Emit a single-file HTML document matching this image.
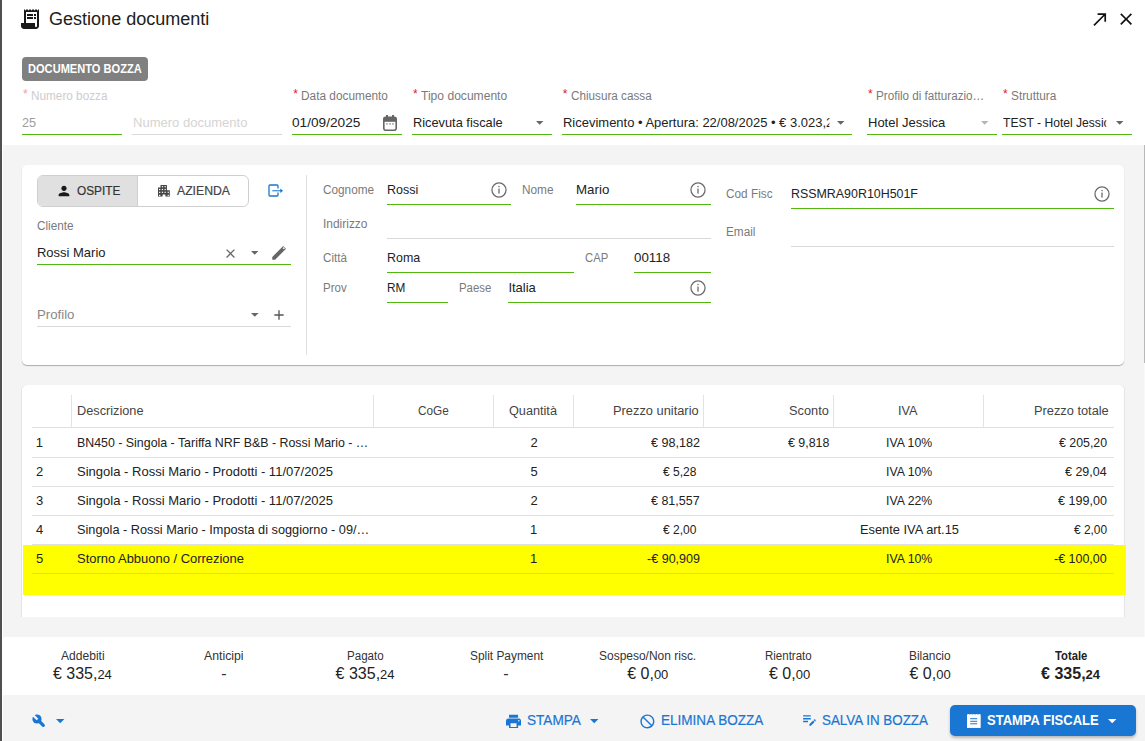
<!DOCTYPE html>
<html><head><meta charset="utf-8"><title>Gestione documenti</title>
<style>
html,body{margin:0;padding:0;}
body{width:1145px;height:741px;overflow:hidden;position:relative;background:#fff;font-family:"Liberation Sans", sans-serif;}
.r{position:absolute;}
.t{position:absolute;white-space:nowrap;}
</style></head><body>
<div class="r" style="left:0px;top:0px;width:1145px;height:741px;background:#fff;"></div>
<div class="r" style="left:3px;top:145px;width:1142px;height:596px;background:#f4f4f4;"></div>
<div class="r" style="left:0px;top:0px;width:2px;height:741px;background:#505050;"></div>
<div class="r" style="left:1144px;top:145px;width:1px;height:218px;background:#b8b8b8;"></div>
<div class="r" style="left:1144px;top:363px;width:1px;height:274px;background:#f9f9f9;"></div>
<svg class="r" style="left:18px;top:7.2px;" width="24" height="24" viewBox="0 0 24 24"><path fill="#1a1a1a" d="M19.5 3.5L18 2l-1.5 1.5L15 2l-1.5 1.5L12 2l-1.5 1.5L9 2 7.5 3.5 6 2v14H3v3c0 1.66 1.34 3 3 3h12c1.66 0 3-1.34 3-3V2l-1.5 1.5zM19 19c0 .55-.45 1-1 1s-1-.45-1-1v-3H8V5h11v14zM9 7h6v2H9zm7 0h2v2h-2zm-7 3h6v2H9zm7 0h2v2h-2z"/></svg>
<div class="t" style="left:48.60px;top:9.76px;font-size:18px;line-height:18px;color:#212121;font-weight:normal;transform:scaleX(1.0017);transform-origin:0 0;">Gestione documenti</div>
<svg class="r" style="left:1089.8px;top:8.7px;" width="20.3" height="20.3" viewBox="0 0 24 24"><path fill="#111" d="M9 5v2h6.59L4 18.59 5.41 20 17 8.41V15h2V5z"/></svg>
<svg class="r" style="left:1115.9px;top:9px;" width="20.2" height="20.2" viewBox="0 0 24 24"><path fill="#111" d="M19 6.41L17.59 5 12 10.59 6.41 5 5 6.41 10.59 12 5 17.59 6.41 19 12 13.41 17.59 19 19 17.59 13.41 12z"/></svg>
<div class="r" style="left:22px;top:57px;width:126px;height:24px;background:#808080;border-radius:4px;"></div>
<div class="t" style="left:28.00px;top:62.74px;font-size:12px;line-height:12px;color:#fff;font-weight:bold;transform:scaleX(0.9235);transform-origin:0 0;">DOCUMENTO BOZZA</div>
<div class="t" style="left:22.89px;top:88.14px;font-size:12px;line-height:12px;color:#f0a0a0;font-weight:normal;transform:scaleX(1.0000);transform-origin:0 0;">*</div>
<div class="t" style="left:30.60px;top:89.84px;font-size:12px;line-height:12px;color:#cdcdcd;font-weight:normal;transform:scaleX(0.9805);transform-origin:0 0;">Numero bozza</div>
<div class="t" style="left:22.40px;top:116.00px;font-size:13px;line-height:13px;color:#9e9e9e;font-weight:normal;transform:scaleX(0.9793);transform-origin:0 0;">25</div>
<div class="r" style="left:22px;top:134px;width:100px;height:1px;background:#52b711;"></div>
<div class="t" style="left:132.60px;top:116.00px;font-size:13px;line-height:13px;color:#d4d4d4;font-weight:normal;transform:scaleX(1.0024);transform-origin:0 0;">Numero documento</div>
<div class="r" style="left:132px;top:134px;width:150px;height:1px;background:#d9d9d9;"></div>
<div class="t" style="left:293.19px;top:88.14px;font-size:12px;line-height:12px;color:#e02020;font-weight:normal;transform:scaleX(1.0000);transform-origin:0 0;">*</div>
<div class="t" style="left:300.80px;top:89.84px;font-size:12px;line-height:12px;color:#7a7a7a;font-weight:normal;transform:scaleX(0.9875);transform-origin:0 0;">Data documento</div>
<div class="t" style="left:292.10px;top:116.00px;font-size:13px;line-height:13px;color:#222;font-weight:normal;transform:scaleX(1.0503);transform-origin:0 0;">01/09/2025</div>
<div class="r" style="left:292px;top:134px;width:110px;height:1px;background:#52b711;"></div>
<div class="t" style="left:412.99px;top:88.14px;font-size:12px;line-height:12px;color:#e02020;font-weight:normal;transform:scaleX(1.0000);transform-origin:0 0;">*</div>
<div class="t" style="left:420.70px;top:89.84px;font-size:12px;line-height:12px;color:#7a7a7a;font-weight:normal;transform:scaleX(1.0067);transform-origin:0 0;">Tipo documento</div>
<div class="t" style="left:412.60px;top:116.00px;font-size:13px;line-height:13px;color:#222;font-weight:normal;transform:scaleX(0.9846);transform-origin:0 0;">Ricevuta fiscale</div>
<div class="r" style="left:412px;top:134px;width:140px;height:1px;background:#52b711;"></div>
<div class="t" style="left:562.79px;top:88.14px;font-size:12px;line-height:12px;color:#e02020;font-weight:normal;transform:scaleX(1.0000);transform-origin:0 0;">*</div>
<div class="t" style="left:570.50px;top:89.84px;font-size:12px;line-height:12px;color:#7a7a7a;font-weight:normal;transform:scaleX(0.9752);transform-origin:0 0;">Chiusura cassa</div>
<div class="t" style="left:563.00px;top:116.00px;font-size:13px;line-height:13px;color:#222;font-weight:normal;transform:scaleX(0.9981);transform-origin:0 0;width:266.51px;overflow:hidden;">Ricevimento • Apertura: 22/08/2025 • € 3.023,24</div>
<div class="r" style="left:562px;top:134px;width:290px;height:1px;background:#52b711;"></div>
<div class="t" style="left:867.89px;top:88.14px;font-size:12px;line-height:12px;color:#e02020;font-weight:normal;transform:scaleX(1.0000);transform-origin:0 0;">*</div>
<div class="t" style="left:875.50px;top:89.84px;font-size:12px;line-height:12px;color:#7a7a7a;font-weight:normal;transform:scaleX(0.9715);transform-origin:0 0;">Profilo di fatturazio…</div>
<div class="t" style="left:867.70px;top:116.00px;font-size:13px;line-height:13px;color:#222;font-weight:normal;transform:scaleX(0.9990);transform-origin:0 0;">Hotel Jessica</div>
<div class="r" style="left:867px;top:134px;width:130px;height:1px;background:#52b711;"></div>
<div class="t" style="left:1003.09px;top:88.14px;font-size:12px;line-height:12px;color:#e02020;font-weight:normal;transform:scaleX(1.0000);transform-origin:0 0;">*</div>
<div class="t" style="left:1010.50px;top:89.84px;font-size:12px;line-height:12px;color:#7a7a7a;font-weight:normal;transform:scaleX(0.9843);transform-origin:0 0;">Struttura</div>
<div class="t" style="left:1003.10px;top:116.00px;font-size:13px;line-height:13px;color:#222;font-weight:normal;transform:scaleX(0.9302);transform-origin:0 0;width:111.16px;overflow:hidden;">TEST - Hotel Jessica</div>
<div class="r" style="left:1002px;top:134px;width:130px;height:1px;background:#52b711;"></div>
<svg class="r" style="left:383px;top:115px" width="14" height="16" viewBox="0 0 14 16"><rect x="3" y="0" width="2" height="3" fill="#666"/><rect x="9" y="0" width="2" height="3" fill="#666"/><rect x="0.8" y="2.3" width="12.4" height="13" rx="2" fill="none" stroke="#666" stroke-width="1.6"/><rect x="0.8" y="2.3" width="12.4" height="4.5" fill="#666"/><rect x="3" y="8.3" width="2" height="1.2" fill="#999"/><rect x="6" y="8.3" width="2" height="1.2" fill="#999"/><rect x="9" y="8.3" width="2" height="1.2" fill="#999"/></svg>
<svg class="r" style="left:535.30px;top:120.00px" width="9.40" height="5.70"><polygon points="1,1 8.40,1 4.70,4.70" fill="#666"/></svg>
<svg class="r" style="left:835.50px;top:120.00px" width="9.40" height="5.70"><polygon points="1,1 8.40,1 4.70,4.70" fill="#666"/></svg>
<svg class="r" style="left:979.60px;top:120.00px" width="9.40" height="5.70"><polygon points="1,1 8.40,1 4.70,4.70" fill="#b5b5b5"/></svg>
<svg class="r" style="left:1115.40px;top:120.00px" width="9.40" height="5.70"><polygon points="1,1 8.40,1 4.70,4.70" fill="#666"/></svg>
<div class="r" style="left:22px;top:165px;width:1102px;height:200px;background:#fff;border-radius:5px;box-shadow:0 1px 1px rgba(0,0,0,0.3);"></div>
<div class="r" style="left:37px;top:175px;width:212px;height:32px;box-sizing:border-box;border:1px solid #cfcfcf;border-radius:6px;background:#fff;overflow:hidden;"></div>
<div class="r" style="left:38px;top:176px;width:100px;height:30px;background:#e0e0e0;border-radius:5px 0 0 5px;"></div>
<div class="r" style="left:137px;top:176px;width:1px;height:30px;background:#cfcfcf;"></div>
<svg class="r" style="left:56px;top:182.8px;" width="16" height="16" viewBox="0 0 24 24"><path fill="#1a1a1a" d="M12 12c2.21 0 4-1.79 4-4s-1.79-4-4-4-4 1.79-4 4 1.79 4 4 4zm0 2c-2.67 0-8 1.34-8 4v2h16v-2c0-2.66-5.33-4-8-4z"/></svg>
<div class="t" style="left:76.70px;top:184.00px;font-size:13px;line-height:13px;color:#333;font-weight:normal;transform:scaleX(0.9092);transform-origin:0 0;-webkit-text-stroke:0.2px #333;">OSPITE</div>
<svg class="r" style="left:157.9px;top:185px" width="12" height="12" viewBox="0 0 12 12"><path fill="#444" d="M2.5 0H8.9V5.2H11.8V11.6H7.4V9.4H4.6V11.6H0V2.5H2.5Z"/><rect x="3.80" y="1.10" width="1.3" height="1.2" fill="#fff"/><rect x="6.50" y="1.10" width="1.3" height="1.2" fill="#fff"/><rect x="1.00" y="3.90" width="1.3" height="1.2" fill="#fff"/><rect x="3.80" y="3.90" width="1.3" height="1.2" fill="#fff"/><rect x="6.50" y="3.90" width="1.3" height="1.2" fill="#fff"/><rect x="1.00" y="6.70" width="1.3" height="1.2" fill="#fff"/><rect x="3.80" y="6.70" width="1.3" height="1.2" fill="#fff"/><rect x="6.50" y="6.70" width="1.3" height="1.2" fill="#fff"/><rect x="9.60" y="6.70" width="1.3" height="1.2" fill="#fff"/><rect x="1.00" y="9.70" width="1.3" height="1.2" fill="#fff"/><rect x="9.60" y="9.70" width="1.3" height="1.2" fill="#fff"/></svg>
<div class="t" style="left:177.00px;top:184.00px;font-size:13px;line-height:13px;color:#444;font-weight:normal;transform:scaleX(0.9401);transform-origin:0 0;-webkit-text-stroke:0.2px #444;">AZIENDA</div>
<svg class="r" style="left:268px;top:184.3px" width="16" height="14" viewBox="0 0 16 14"><path d="M10 4.5V2a1 1 0 0 0-1-1H2a1 1 0 0 0-1 1V11a1 1 0 0 0 1 1H9a1 1 0 0 0 1-1V8.5" fill="none" stroke="#1976d2" stroke-width="1.3"/><path d="M4.3 6.7H13" stroke="#1976d2" stroke-width="1.3" opacity="0.8"/><path d="M12.3 4.4L15 6.7L12.3 9Z" fill="#1976d2"/></svg>
<div class="t" style="left:37.00px;top:219.84px;font-size:12px;line-height:12px;color:#7a7a7a;font-weight:normal;transform:scaleX(0.9793);transform-origin:0 0;">Cliente</div>
<div class="t" style="left:37.00px;top:246.00px;font-size:13px;line-height:13px;color:#222;font-weight:normal;transform:scaleX(0.9982);transform-origin:0 0;">Rossi Mario</div>
<div class="r" style="left:37px;top:264px;width:254px;height:1px;background:#52b711;"></div>
<svg class="r" style="left:223px;top:245.5px;" width="15" height="15" viewBox="0 0 24 24"><path fill="#666" d="M19 6.41L17.59 5 12 10.59 6.41 5 5 6.41 10.59 12 5 17.59 6.41 19 12 13.41 17.59 19 19 17.59 13.41 12z"/></svg>
<svg class="r" style="left:250.30px;top:250.00px" width="9.40" height="5.70"><polygon points="1,1 8.40,1 4.70,4.70" fill="#666"/></svg>
<svg class="r" style="left:270.2px;top:244.4px" width="18" height="18" viewBox="0 0 24 24"><path fill="#666" d="M3 17.25V21h3.75L20.71 7.04c.39-.39.39-1.02 0-1.41l-2.34-2.34c-.39-.39-1.02-.39-1.41 0L3 17.25z"/><rect x="-1.1" y="-1.1" width="2.2" height="2.2" transform="translate(18.4 5.6) rotate(45)" fill="#fff"/></svg>
<div class="t" style="left:37.00px;top:308.00px;font-size:13px;line-height:13px;color:#888;font-weight:normal;transform:scaleX(1.0169);transform-origin:0 0;">Profilo</div>
<div class="r" style="left:37px;top:326px;width:254px;height:1px;background:#d9d9d9;"></div>
<svg class="r" style="left:250.40px;top:311.80px" width="9.60" height="5.80"><polygon points="1,1 8.60,1 4.80,4.80" fill="#666"/></svg>
<svg class="r" style="left:271px;top:307px;" width="16" height="16" viewBox="0 0 24 24"><path fill="#555" d="M19 13h-6v6h-2v-6H5v-2h6V5h2v6h6v2z"/></svg>
<div class="r" style="left:306px;top:175px;width:1px;height:180px;background:#e0e0e0;"></div>
<div class="t" style="left:322.50px;top:183.84px;font-size:12px;line-height:12px;color:#7a7a7a;font-weight:normal;transform:scaleX(0.9808);transform-origin:0 0;">Cognome</div>
<div class="t" style="left:387.40px;top:183.00px;font-size:13px;line-height:13px;color:#222;font-weight:normal;transform:scaleX(0.9600);transform-origin:0 0;">Rossi</div>
<div class="r" style="left:387px;top:204px;width:124px;height:1px;background:#52b711;"></div>
<svg class="r" style="left:491.20px;top:182.20px" width="16" height="16" viewBox="0 0 16 16"><circle cx="8" cy="8" r="7.05" fill="none" stroke="#6a6a6a" stroke-width="1.25"/><rect x="7.35" y="3.9" width="1.3" height="1.3" fill="#6a6a6a"/><rect x="7.35" y="6.6" width="1.3" height="5" fill="#6a6a6a"/></svg>
<div class="t" style="left:521.60px;top:183.84px;font-size:12px;line-height:12px;color:#7a7a7a;font-weight:normal;transform:scaleX(0.9844);transform-origin:0 0;">Nome</div>
<div class="t" style="left:576.40px;top:183.00px;font-size:13px;line-height:13px;color:#222;font-weight:normal;transform:scaleX(1.0246);transform-origin:0 0;">Mario</div>
<div class="r" style="left:576px;top:204px;width:135px;height:1px;background:#52b711;"></div>
<svg class="r" style="left:690.40px;top:182.30px" width="16" height="16" viewBox="0 0 16 16"><circle cx="8" cy="8" r="7.05" fill="none" stroke="#6a6a6a" stroke-width="1.25"/><rect x="7.35" y="3.9" width="1.3" height="1.3" fill="#6a6a6a"/><rect x="7.35" y="6.6" width="1.3" height="5" fill="#6a6a6a"/></svg>
<div class="t" style="left:322.50px;top:217.84px;font-size:12px;line-height:12px;color:#7a7a7a;font-weight:normal;transform:scaleX(0.9950);transform-origin:0 0;">Indirizzo</div>
<div class="r" style="left:387px;top:238px;width:324px;height:1px;background:#d9d9d9;"></div>
<div class="t" style="left:322.50px;top:251.84px;font-size:12px;line-height:12px;color:#7a7a7a;font-weight:normal;transform:scaleX(0.9697);transform-origin:0 0;">Città</div>
<div class="t" style="left:387.40px;top:251.00px;font-size:13px;line-height:13px;color:#222;font-weight:normal;transform:scaleX(0.9554);transform-origin:0 0;">Roma</div>
<div class="r" style="left:387px;top:272px;width:187px;height:1px;background:#52b711;"></div>
<div class="t" style="left:584.50px;top:251.84px;font-size:12px;line-height:12px;color:#7a7a7a;font-weight:normal;transform:scaleX(0.9381);transform-origin:0 0;">CAP</div>
<div class="t" style="left:634.40px;top:251.00px;font-size:13px;line-height:13px;color:#222;font-weight:normal;transform:scaleX(1.0241);transform-origin:0 0;">00118</div>
<div class="r" style="left:634px;top:272px;width:77px;height:1px;background:#52b711;"></div>
<div class="t" style="left:322.50px;top:281.84px;font-size:12px;line-height:12px;color:#7a7a7a;font-weight:normal;transform:scaleX(0.9584);transform-origin:0 0;">Prov</div>
<div class="t" style="left:387.40px;top:281.00px;font-size:13px;line-height:13px;color:#222;font-weight:normal;transform:scaleX(0.9086);transform-origin:0 0;">RM</div>
<div class="r" style="left:387px;top:302px;width:61px;height:1px;background:#52b711;"></div>
<div class="t" style="left:458.50px;top:281.84px;font-size:12px;line-height:12px;color:#7a7a7a;font-weight:normal;transform:scaleX(0.9500);transform-origin:0 0;">Paese</div>
<div class="t" style="left:508.40px;top:281.00px;font-size:13px;line-height:13px;color:#222;font-weight:normal;transform:scaleX(1.0000);transform-origin:0 0;">Italia</div>
<div class="r" style="left:508px;top:302px;width:203px;height:1px;background:#52b711;"></div>
<svg class="r" style="left:690.40px;top:280.00px" width="16" height="16" viewBox="0 0 16 16"><circle cx="8" cy="8" r="7.05" fill="none" stroke="#6a6a6a" stroke-width="1.25"/><rect x="7.35" y="3.9" width="1.3" height="1.3" fill="#6a6a6a"/><rect x="7.35" y="6.6" width="1.3" height="5" fill="#6a6a6a"/></svg>
<div class="t" style="left:725.60px;top:187.84px;font-size:12px;line-height:12px;color:#7a7a7a;font-weight:normal;transform:scaleX(0.9836);transform-origin:0 0;">Cod Fisc</div>
<div class="t" style="left:790.60px;top:187.00px;font-size:13px;line-height:13px;color:#222;font-weight:normal;transform:scaleX(0.9549);transform-origin:0 0;">RSSMRA90R10H501F</div>
<div class="r" style="left:791px;top:208px;width:323px;height:1px;background:#52b711;"></div>
<svg class="r" style="left:1093.80px;top:185.90px" width="16" height="16" viewBox="0 0 16 16"><circle cx="8" cy="8" r="7.05" fill="none" stroke="#6a6a6a" stroke-width="1.25"/><rect x="7.35" y="3.9" width="1.3" height="1.3" fill="#6a6a6a"/><rect x="7.35" y="6.6" width="1.3" height="5" fill="#6a6a6a"/></svg>
<div class="t" style="left:725.60px;top:225.84px;font-size:12px;line-height:12px;color:#7a7a7a;font-weight:normal;transform:scaleX(0.9800);transform-origin:0 0;">Email</div>
<div class="r" style="left:791px;top:246px;width:323px;height:1px;background:#d9d9d9;"></div>
<div class="r" style="left:22px;top:385px;width:1102px;height:232px;background:#fff;border-radius:5px 5px 0 0;box-shadow:-1px 0 0 rgba(0,0,0,0.06), 1px 0 0 rgba(0,0,0,0.06);"></div>
<div class="r" style="left:23px;top:545px;width:1103px;height:50px;background:#ffff00;"></div>
<div class="r" style="left:71px;top:395px;width:1px;height:32px;background:#e3e3e3;"></div>
<div class="r" style="left:373px;top:395px;width:1px;height:32px;background:#e3e3e3;"></div>
<div class="r" style="left:493px;top:395px;width:1px;height:32px;background:#e3e3e3;"></div>
<div class="r" style="left:573px;top:395px;width:1px;height:32px;background:#e3e3e3;"></div>
<div class="r" style="left:703px;top:395px;width:1px;height:32px;background:#e3e3e3;"></div>
<div class="r" style="left:833px;top:395px;width:1px;height:32px;background:#e3e3e3;"></div>
<div class="r" style="left:983px;top:395px;width:1px;height:32px;background:#e3e3e3;"></div>
<div class="r" style="left:32px;top:427px;width:1082px;height:1px;background:#e0e0e0;"></div>
<div class="t" style="left:76.80px;top:404.84px;font-size:12px;line-height:12px;color:#444;font-weight:normal;transform:scaleX(1.0614);transform-origin:0 0;">Descrizione</div>
<div class="t" style="left:418.20px;top:404.84px;font-size:12px;line-height:12px;color:#444;font-weight:normal;transform:scaleX(0.9817);transform-origin:0 0;">CoGe</div>
<div class="t" style="left:509.40px;top:404.84px;font-size:12px;line-height:12px;color:#444;font-weight:normal;transform:scaleX(1.0571);transform-origin:0 0;">Quantità</div>
<div class="t" style="left:613.10px;top:404.84px;font-size:12px;line-height:12px;color:#444;font-weight:normal;transform:scaleX(1.0700);transform-origin:0 0;">Prezzo unitario</div>
<div class="t" style="left:788.60px;top:404.84px;font-size:12px;line-height:12px;color:#444;font-weight:normal;transform:scaleX(1.0649);transform-origin:0 0;">Sconto</div>
<div class="t" style="left:898.30px;top:404.84px;font-size:12px;line-height:12px;color:#444;font-weight:normal;transform:scaleX(1.0541);transform-origin:0 0;">IVA</div>
<div class="t" style="left:1033.50px;top:404.84px;font-size:12px;line-height:12px;color:#444;font-weight:normal;transform:scaleX(1.0671);transform-origin:0 0;">Prezzo totale</div>
<div class="t" style="left:35.83px;top:435.80px;font-size:13px;line-height:13px;color:#222;font-weight:normal;transform:scaleX(1.0000);transform-origin:0 0;">1</div>
<div class="t" style="left:76.50px;top:435.80px;font-size:13px;line-height:13px;color:#222;font-weight:normal;transform:scaleX(0.9523);transform-origin:0 0;">BN450 - Singola - Tariffa NRF B&amp;B - Rossi Mario - …</div>
<div class="t" style="left:530.38px;top:435.80px;font-size:13px;line-height:13px;color:#222;font-weight:normal;transform:scaleX(1.0000);transform-origin:0 0;">2</div>
<div class="t" style="left:650.90px;top:435.80px;font-size:13px;line-height:13px;color:#222;font-weight:normal;transform:scaleX(0.9699);transform-origin:0 0;">€ 98,182</div>
<div class="t" style="left:788.20px;top:435.80px;font-size:13px;line-height:13px;color:#222;font-weight:normal;transform:scaleX(0.9545);transform-origin:0 0;">€ 9,818</div>
<div class="t" style="left:885.90px;top:435.80px;font-size:13px;line-height:13px;color:#222;font-weight:normal;transform:scaleX(0.9432);transform-origin:0 0;">IVA 10%</div>
<div class="t" style="left:1058.60px;top:435.80px;font-size:13px;line-height:13px;color:#222;font-weight:normal;transform:scaleX(0.9501);transform-origin:0 0;">€ 205,20</div>
<div class="t" style="left:35.88px;top:464.90px;font-size:13px;line-height:13px;color:#222;font-weight:normal;transform:scaleX(1.0000);transform-origin:0 0;">2</div>
<div class="t" style="left:76.50px;top:464.90px;font-size:13px;line-height:13px;color:#222;font-weight:normal;transform:scaleX(1.0022);transform-origin:0 0;">Singola - Rossi Mario - Prodotti - 11/07/2025</div>
<div class="t" style="left:530.48px;top:464.90px;font-size:13px;line-height:13px;color:#222;font-weight:normal;transform:scaleX(1.0000);transform-origin:0 0;">5</div>
<div class="t" style="left:663.00px;top:464.90px;font-size:13px;line-height:13px;color:#222;font-weight:normal;transform:scaleX(0.9246);transform-origin:0 0;">€ 5,28</div>
<div class="t" style="left:886.00px;top:464.90px;font-size:13px;line-height:13px;color:#222;font-weight:normal;transform:scaleX(0.9453);transform-origin:0 0;">IVA 10%</div>
<div class="t" style="left:1065.00px;top:464.90px;font-size:13px;line-height:13px;color:#222;font-weight:normal;transform:scaleX(0.9591);transform-origin:0 0;">€ 29,04</div>
<div class="t" style="left:35.88px;top:493.90px;font-size:13px;line-height:13px;color:#222;font-weight:normal;transform:scaleX(1.0000);transform-origin:0 0;">3</div>
<div class="t" style="left:76.50px;top:493.90px;font-size:13px;line-height:13px;color:#222;font-weight:normal;transform:scaleX(1.0022);transform-origin:0 0;">Singola - Rossi Mario - Prodotti - 11/07/2025</div>
<div class="t" style="left:530.38px;top:493.90px;font-size:13px;line-height:13px;color:#222;font-weight:normal;transform:scaleX(1.0000);transform-origin:0 0;">2</div>
<div class="t" style="left:651.20px;top:493.90px;font-size:13px;line-height:13px;color:#222;font-weight:normal;transform:scaleX(0.9600);transform-origin:0 0;">€ 81,557</div>
<div class="t" style="left:886.00px;top:493.90px;font-size:13px;line-height:13px;color:#222;font-weight:normal;transform:scaleX(0.9453);transform-origin:0 0;">IVA 22%</div>
<div class="t" style="left:1057.70px;top:493.90px;font-size:13px;line-height:13px;color:#222;font-weight:normal;transform:scaleX(0.9659);transform-origin:0 0;">€ 199,00</div>
<div class="t" style="left:35.88px;top:523.00px;font-size:13px;line-height:13px;color:#222;font-weight:normal;transform:scaleX(1.0000);transform-origin:0 0;">4</div>
<div class="t" style="left:76.50px;top:523.00px;font-size:13px;line-height:13px;color:#222;font-weight:normal;transform:scaleX(0.9793);transform-origin:0 0;">Singola - Rossi Mario - Imposta di soggiorno - 09/…</div>
<div class="t" style="left:529.88px;top:523.00px;font-size:13px;line-height:13px;color:#222;font-weight:normal;transform:scaleX(1.0000);transform-origin:0 0;">1</div>
<div class="t" style="left:663.00px;top:523.00px;font-size:13px;line-height:13px;color:#222;font-weight:normal;transform:scaleX(0.9246);transform-origin:0 0;">€ 2,00</div>
<div class="t" style="left:859.60px;top:523.00px;font-size:13px;line-height:13px;color:#222;font-weight:normal;transform:scaleX(0.9875);transform-origin:0 0;">Esente IVA art.15</div>
<div class="t" style="left:1073.50px;top:523.00px;font-size:13px;line-height:13px;color:#222;font-weight:normal;transform:scaleX(0.9163);transform-origin:0 0;">€ 2,00</div>
<div class="t" style="left:35.88px;top:552.00px;font-size:13px;line-height:13px;color:#222;font-weight:normal;transform:scaleX(1.0000);transform-origin:0 0;">5</div>
<div class="t" style="left:76.50px;top:552.00px;font-size:13px;line-height:13px;color:#222;font-weight:normal;transform:scaleX(0.9957);transform-origin:0 0;">Storno Abbuono / Correzione</div>
<div class="t" style="left:529.88px;top:552.00px;font-size:13px;line-height:13px;color:#222;font-weight:normal;transform:scaleX(1.0000);transform-origin:0 0;">1</div>
<div class="t" style="left:647.00px;top:552.00px;font-size:13px;line-height:13px;color:#222;font-weight:normal;transform:scaleX(0.9658);transform-origin:0 0;">-€ 90,909</div>
<div class="t" style="left:886.00px;top:552.00px;font-size:13px;line-height:13px;color:#222;font-weight:normal;transform:scaleX(0.9453);transform-origin:0 0;">IVA 10%</div>
<div class="t" style="left:1054.00px;top:552.00px;font-size:13px;line-height:13px;color:#222;font-weight:normal;transform:scaleX(0.9585);transform-origin:0 0;">-€ 100,00</div>
<div class="r" style="left:32px;top:457px;width:1082px;height:1px;background:#e0e0e0;"></div>
<div class="r" style="left:32px;top:486px;width:1082px;height:1px;background:#e0e0e0;"></div>
<div class="r" style="left:32px;top:515px;width:1082px;height:1px;background:#e0e0e0;"></div>
<div class="r" style="left:32px;top:544px;width:1082px;height:1px;background:#e0e0e0;"></div>
<div class="r" style="left:32px;top:573px;width:1082px;height:1px;background:#e6e600;"></div>
<div class="r" style="left:23px;top:545px;width:1103px;height:0px;"></div>
<div class="r" style="left:2px;top:637px;width:1143px;height:58px;background:#fff;border-radius:4px 0 0 0;"></div>
<div class="t" style="left:60.90px;top:650.04px;font-size:12px;line-height:12px;color:#333;font-weight:normal;transform:scaleX(1.0052);transform-origin:0 0;">Addebiti</div>
<div class="t" style="left:203.90px;top:650.04px;font-size:12px;line-height:12px;color:#333;font-weight:normal;transform:scaleX(1.0227);transform-origin:0 0;">Anticipi</div>
<div class="t" style="left:347.00px;top:650.04px;font-size:12px;line-height:12px;color:#333;font-weight:normal;transform:scaleX(0.9632);transform-origin:0 0;">Pagato</div>
<div class="t" style="left:469.50px;top:650.04px;font-size:12px;line-height:12px;color:#333;font-weight:normal;transform:scaleX(0.9905);transform-origin:0 0;">Split Payment</div>
<div class="t" style="left:599.00px;top:650.04px;font-size:12px;line-height:12px;color:#333;font-weight:normal;transform:scaleX(0.9982);transform-origin:0 0;">Sospeso/Non risc.</div>
<div class="t" style="left:765.30px;top:650.04px;font-size:12px;line-height:12px;color:#333;font-weight:normal;transform:scaleX(0.9579);transform-origin:0 0;">Rientrato</div>
<div class="t" style="left:909.30px;top:650.04px;font-size:12px;line-height:12px;color:#333;font-weight:normal;transform:scaleX(0.9905);transform-origin:0 0;">Bilancio</div>
<div class="t" style="left:1055.20px;top:650.04px;font-size:12px;line-height:12px;color:#222;font-weight:bold;transform:scaleX(0.9362);transform-origin:0 0;">Totale</div>
<div class="t" style="left:52.90px;top:666.46px;font-size:16px;line-height:16px;color:#222;font-weight:normal;">€ 335,<span style="font-size:13px">24</span></div>
<div class="t" style="left:221.31px;top:666.46px;font-size:16px;line-height:16px;color:#333;font-weight:normal;transform:scaleX(1.0000);transform-origin:0 0;">-</div>
<div class="t" style="left:335.60px;top:666.46px;font-size:16px;line-height:16px;color:#222;font-weight:normal;">€ 335,<span style="font-size:13px">24</span></div>
<div class="t" style="left:503.31px;top:666.46px;font-size:16px;line-height:16px;color:#333;font-weight:normal;transform:scaleX(1.0000);transform-origin:0 0;">-</div>
<div class="t" style="left:627.20px;top:666.46px;font-size:16px;line-height:16px;color:#222;font-weight:normal;">€ 0,<span style="font-size:13px">00</span></div>
<div class="t" style="left:769.00px;top:666.46px;font-size:16px;line-height:16px;color:#222;font-weight:normal;">€ 0,<span style="font-size:13px">00</span></div>
<div class="t" style="left:909.50px;top:666.46px;font-size:16px;line-height:16px;color:#222;font-weight:normal;">€ 0,<span style="font-size:13px">00</span></div>
<div class="t" style="left:1041.10px;top:666.46px;font-size:16px;line-height:16px;color:#222;font-weight:bold;">€ 335,<span style="font-size:13px">24</span></div>
<svg class="r" style="left:32.1px;top:714.3px" width="14" height="14" viewBox="0 0 14 14"><circle cx="5" cy="5" r="4.6" fill="#1976d2"/><line x1="5" y1="5" x2="11.3" y2="11.3" stroke="#1976d2" stroke-width="3.2" stroke-linecap="round"/><rect x="-1.2" y="-3" width="2.4" height="7.5" transform="translate(2.3 2.3) rotate(-45)" fill="#f4f4f4"/></svg>
<svg class="r" style="left:54.70px;top:717.80px" width="10.40" height="6.20"><polygon points="1,1 9.40,1 5.20,5.20" fill="#1976d2"/></svg>
<svg class="r" style="left:505.9px;top:713.6px" width="15.1" height="14.5" viewBox="2 2 20 19" preserveAspectRatio="none"><path fill="#1976d2" d="M19 8H5c-1.66 0-3 1.34-3 3v6h4v4h12v-4h4v-6c0-1.66-1.34-3-3-3zm-3 11H8v-5h8v5zm3-7c-.55 0-1-.45-1-1s.45-1 1-1 1 .45 1 1-.45 1-1 1zm-1-9H6v4h12V3z"/></svg>
<div class="t" style="left:526.80px;top:712.95px;font-size:14px;line-height:14px;color:#1976d2;font-weight:normal;transform:scaleX(0.9712);transform-origin:0 0;-webkit-text-stroke:0.2px #1976d2;">STAMPA</div>
<svg class="r" style="left:589.10px;top:717.60px" width="10.40" height="6.20"><polygon points="1,1 9.40,1 5.20,5.20" fill="#1976d2"/></svg>
<svg class="r" style="left:638.8px;top:712.7px" width="16.8" height="16.8" viewBox="0 0 24 24"><g transform="translate(24 0) scale(-1 1)"><path fill="#1976d2" d="M12 2C6.48 2 2 6.48 2 12s4.48 10 10 10 10-4.48 10-10S17.52 2 12 2zM4 12c0-4.42 3.58-8 8-8 1.85 0 3.55.63 4.9 1.69L5.69 16.9C4.63 15.55 4 13.85 4 12zm8 8c-1.85 0-3.55-.63-4.9-1.69L18.31 7.1C19.37 8.45 20 10.15 20 12c0 4.42-3.58 8-8 8z"/></g></svg>
<div class="t" style="left:660.50px;top:712.95px;font-size:14px;line-height:14px;color:#1976d2;font-weight:normal;transform:scaleX(0.9672);transform-origin:0 0;-webkit-text-stroke:0.2px #1976d2;">ELIMINA BOZZA</div>
<svg class="r" style="left:801.3px;top:711.4px;" width="16.8" height="16.8" viewBox="0 0 24 24"><path fill="#1976d2" d="M3 10h11v2H3v-2zm0-2h11V6H3v2zm0 8h7v-2H3v2zm15.01-3.13.71-.71c.39-.39 1.02-.39 1.41 0l.71.71c.39.39.39 1.02 0 1.41l-.71.71-2.12-2.12zm-.71.71-5.3 5.3V21h2.12l5.3-5.3-2.12-2.12z"/></svg>
<div class="t" style="left:822.00px;top:712.95px;font-size:14px;line-height:14px;color:#1976d2;font-weight:normal;transform:scaleX(0.9571);transform-origin:0 0;-webkit-text-stroke:0.2px #1976d2;">SALVA IN BOZZA</div>
<div class="r" style="left:950px;top:705px;width:186px;height:31px;background:#1976d2;border-radius:5px;box-shadow:0 2px 3px rgba(0,0,0,0.25);"></div>
<svg class="r" style="left:967px;top:713.7px" width="13.7" height="14.2" viewBox="0 0 13.7 14.2"><path fill="#fff" d="M0 0.4L1.4 0 2.7 0.4 4.1 0 5.5 0.4 6.8 0 8.2 0.4 9.6 0 11 0.4 12.3 0 13.7 0.4V13.8L12.3 14.2 11 13.8 9.6 14.2 8.2 13.8 6.8 14.2 5.5 13.8 4.1 14.2 2.7 13.8 1.4 14.2 0 13.8Z"/><rect x="3.2" y="4.2" width="7" height="1" fill="#1976d2"/><rect x="3.2" y="6.8" width="7" height="1" fill="#1976d2"/><rect x="3.2" y="9.3" width="7" height="1" fill="#1976d2"/></svg>
<div class="t" style="left:986.90px;top:712.95px;font-size:14px;line-height:14px;color:#fff;font-weight:bold;transform:scaleX(0.9281);transform-origin:0 0;">STAMPA FISCALE</div>
<svg class="r" style="left:1107.20px;top:717.60px" width="10.40" height="6.20"><polygon points="1,1 9.40,1 5.20,5.20" fill="#fff"/></svg>
</body></html>
